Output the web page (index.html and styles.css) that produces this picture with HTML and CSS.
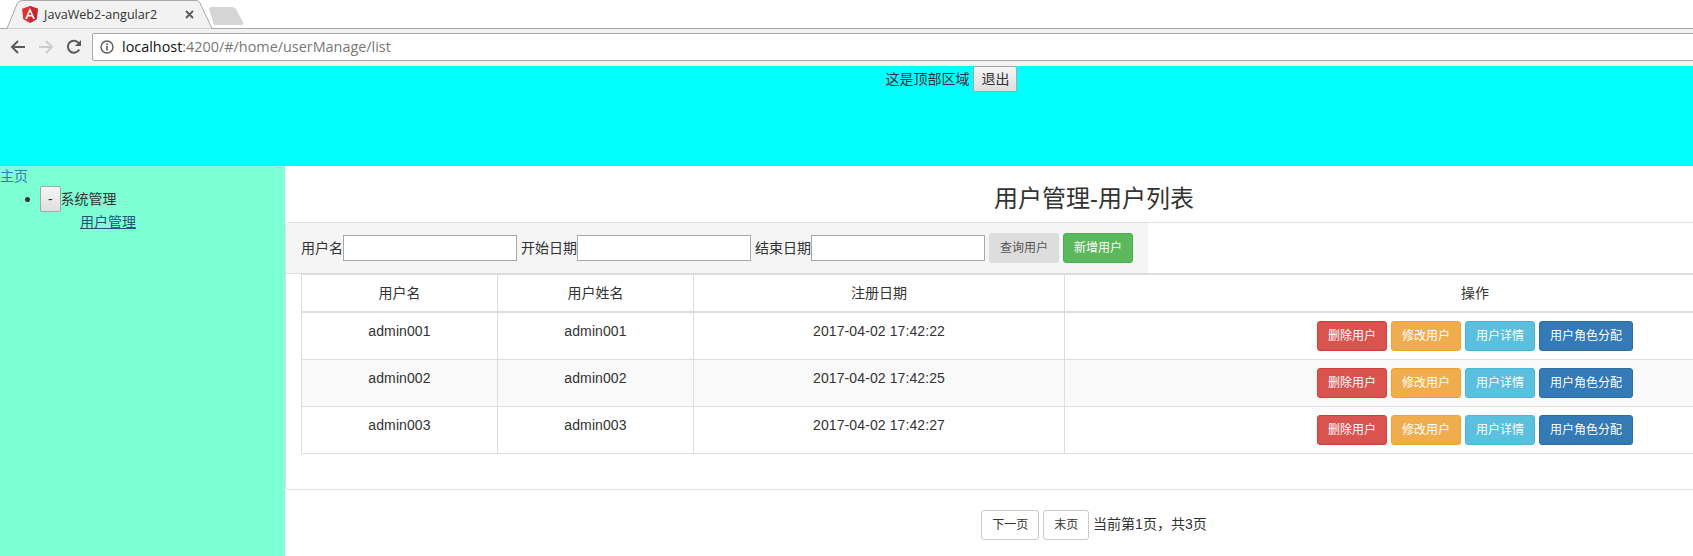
FILE: index.html
```html
<!DOCTYPE html>
<html>
<head>
    <title>JavaWeb2-angular2</title>
    <link rel="stylesheet" href="styles.css">
</head>
<body>

    <div class="browser">
        <div class="tab-strip">
            <div class="tab">
                <svg class="tab-shape" width="206" height="29" viewBox="0 0 206 29">
                    <path d="M0 28.5L10 4Q11.5 .5 15 .5H189Q192 .5 193 3L205 28.5" fill="#f2f2f2" stroke="#a8a8a8"/>
                </svg>
                <svg class="tab-icon" width="16" height="17" viewBox="31 30 188 200">
                    <polygon points="125,30 31.9,63.2 46.1,186.3 125,230 203.9,186.3 218.1,63.2" fill="#dd3333"/>
                    <polygon points="125,30 125,230 203.9,186.3 218.1,63.2" fill="#c3272b"/>
                    <path d="M125 52.1L66.8 182.6h21.7l11.7-29.2h49.4l11.7 29.2h21.7L125 52.1zM142 135.4H108l17-40.9L142 135.4z" fill="#fff"/>
                </svg>
                <span class="tab-title">JavaWeb2-angular2</span>
                <svg class="tab-close" width="9" height="9" viewBox="0 0 9 9">
                    <path d="M1 1L8 8M8 1L1 8" stroke="#5a5a5a" stroke-width="1.8"/>
                </svg>
            </div>
            <svg class="new-tab" width="35" height="18" viewBox="0 0 35 18">
                <path d="M2 0H23C25 0 26 1 27 2L34 15C35 17 34 18 32 18H7C5 18 4 17 4 15L0 2C0 1 1 0 2 0Z" fill="#d5d5d5"/>
            </svg>
        </div>
        <div class="toolbar">
            <svg class="nav-icon" width="16" height="16" viewBox="0 0 16 16">
                <path d="M15 8H2M8 2L2 8L8 14" fill="none" stroke="#5a5a5a" stroke-width="2"/>
            </svg>
            <svg class="nav-icon" width="16" height="16" viewBox="0 0 16 16">
                <path d="M1 8H14M8 2L14 8L8 14" fill="none" stroke="#ccc" stroke-width="2"/>
            </svg>
            <svg class="nav-icon" width="16" height="16" viewBox="0 0 16 16">
                <path d="M13.2 10.5A6 6 0 1 1 12.6 4" fill="none" stroke="#5a5a5a" stroke-width="2"/>
                <path d="M15 1V7H9Z" fill="#5a5a5a"/>
            </svg>
            <div class="address">
                <svg width="14" height="14" viewBox="0 0 14 14">
                    <circle cx="7" cy="7" r="6" fill="none" stroke="#5a5a5a" stroke-width="1.4"/>
                    <path d="M7 6V10.5M7 3.2V5" stroke="#5a5a5a" stroke-width="1.6"/>
                </svg>
                <span class="url"><span class="url-host">localhost</span>:4200/#/home/userManage/list</span>
            </div>
        </div>
    </div>

    <div class="page">
        <div class="topbar">
            这是顶部区域 <button class="plain-btn">退出</button>
        </div>

        <div class="layout">
            <div class="sidebar">
                <a class="home-link" href="#">主页</a>
                <ul class="menu">
                    <li>
                        <button class="plain-btn">-</button>系统管理
                        <ul class="submenu">
                            <li><a class="sub-link" href="#">用户管理</a></li>
                        </ul>
                    </li>
                </ul>
            </div>

            <div class="content">
                <h3 class="page-title">用户管理-用户列表</h3>
                <div class="panel">
                    <div class="search-row">
                        <div class="search-bar">
                            <label>用户名</label><input type="text">
                            <label>开始日期</label><input type="text">
                            <label>结束日期</label><input type="text">
                            <button class="btn btn-query">查询用户</button>
                            <button class="btn btn-success">新增用户</button>
                        </div>
                    </div>
                    <div class="panel-body">
                        <table class="user-table">
                            <thead>
                                <tr>
                                    <th class="col-id">用户名</th>
                                    <th class="col-name">用户姓名</th>
                                    <th class="col-date">注册日期</th>
                                    <th>操作</th>
                                </tr>
                            </thead>
                            <tbody>
                                <tr>
                                    <td>admin001</td>
                                    <td>admin001</td>
                                    <td>2017-04-02 17:42:22</td>
                                    <td>
                                        <button class="btn btn-danger">删除用户</button>
                                        <button class="btn btn-warning">修改用户</button>
                                        <button class="btn btn-info">用户详情</button>
                                        <button class="btn btn-primary">用户角色分配</button>
                                    </td>
                                </tr>
                                <tr>
                                    <td>admin002</td>
                                    <td>admin002</td>
                                    <td>2017-04-02 17:42:25</td>
                                    <td>
                                        <button class="btn btn-danger">删除用户</button>
                                        <button class="btn btn-warning">修改用户</button>
                                        <button class="btn btn-info">用户详情</button>
                                        <button class="btn btn-primary">用户角色分配</button>
                                    </td>
                                </tr>
                                <tr>
                                    <td>admin003</td>
                                    <td>admin003</td>
                                    <td>2017-04-02 17:42:27</td>
                                    <td>
                                        <button class="btn btn-danger">删除用户</button>
                                        <button class="btn btn-warning">修改用户</button>
                                        <button class="btn btn-info">用户详情</button>
                                        <button class="btn btn-primary">用户角色分配</button>
                                    </td>
                                </tr>
                            </tbody>
                        </table>
                    </div>
                </div>
                <div class="pager">
                    <button class="btn btn-default">下一页</button>
                    <button class="btn btn-default">末页</button>
                    当前第1页，共3页
                </div>
            </div>
        </div>
    </div>

</body>
</html>
```

FILE: styles.css
```css
* {
    box-sizing: border-box;
}

html, body {
    height: 556px;
    overflow: hidden;
}

body {
    margin: 0;
    font-family: "Liberation Sans", "Noto Sans CJK SC", sans-serif;
    font-size: 14px;
    line-height: 20px;
    color: #333;
    background: white;
}

/* browser window top */
.browser {
    height: 66px;
    overflow: hidden;
}

.tab-strip {
    display: flex;
    align-items: flex-start;
    height: 29px;
    padding-left: 7px;
    border-bottom: 1px solid #a8a8a8;
}

.tab {
    position: relative;
    display: flex;
    align-items: center;
    flex: none;
    width: 206px;
    height: 29px;
    padding: 0 0 0 15px;
}

.tab-shape {
    position: absolute;
    left: 0;
    top: 0;
}

.tab-icon, .tab-title, .tab-close {
    position: relative;
}

.tab-title {
    margin-left: 6px;
    width: 141px;
    font-family: "Open Sans", sans-serif;
    font-size: 12.6px;
    color: #333;
    white-space: nowrap;
}

.new-tab {
    flex: none;
    margin: 7px 0 0 -4px;
}

.toolbar {
    display: flex;
    align-items: center;
    height: 37px;
    padding: 0 0 1px 10px;
    background: #f2f2f2;
}

.nav-icon {
    flex: none;
    margin-right: 12px;
}

.address {
    display: flex;
    align-items: center;
    flex: 1;
    height: 28px;
    margin: 0 -4px 0 -2px;
    padding-left: 7px;
    background: white;
    border: 1px solid #a9a9a9;
    border-radius: 2px;
}

.url {
    margin-left: 8px;
    font-family: "Open Sans", sans-serif;
    font-size: 14.4px;
    color: #777;
}

.url-host {
    color: #111;
}

/* page, it was wider than the photographed window */
.page {
    width: 1903px;
}

.topbar {
    height: 100px;
    background-color: cyan;
    text-align: center;
}

.plain-btn {
    height: 26px;
    padding: 0 7px;
    font: inherit;
    color: #333;
    background: linear-gradient(#f6f6f6, #dedede);
    border: 1px solid #a6a6a6;
    border-radius: 2px;
}

.layout {
    display: flex;
}

.sidebar {
    flex: none;
    width: 285px;
    height: 390px;
    background-color: aquamarine;
}

.home-link {
    display: block;
    color: #337ab7;
    text-decoration: none;
}

.menu {
    margin: 0;
    padding-left: 40px;
    list-style: none;
}

.menu > li::before {
    content: "";
    display: inline-block;
    width: 5px;
    height: 5px;
    margin: 0 6px 2px -15px;
    background: #333;
    border-radius: 50%;
}

.submenu {
    margin: 0;
    padding-left: 40px;
    list-style: none;
}

.sub-link {
    color: #23527c;
    text-decoration: underline;
}

.content {
    flex: none;
    width: 1618px;
}

.page-title {
    margin: 20px 0 10px;
    font-size: 24px;
    font-weight: 400;
    line-height: 26.4px;
    text-align: center;
}

.panel {
    border: 1px solid #ddd;
    border-radius: 4px;
}

.search-row {
    border-bottom: 1px solid #ddd;
}

.search-bar {
    display: flex;
    align-items: center;
    width: 862px;
    height: 50px;
    padding: 0 15px;
    background: #f5f5f5;
}

.search-bar label {
    flex: none;
}

.search-bar input {
    flex: none;
    width: 174px;
    height: 26px;
    margin-right: 4px;
    padding: 1px 2px;
    background: white;
    border: 1px solid #a9a9a9;
}

.search-bar .btn {
    flex: none;
    margin-right: 4px;
}

.panel-body {
    padding: 0 15px 15px;
}

.user-table {
    width: 1585px;
    margin-bottom: 20px;
    border-collapse: collapse;
    table-layout: fixed;
    text-align: center;
}

.user-table th, .user-table td {
    padding: 8px;
    border: 1px solid #ddd;
    vertical-align: top;
}

.user-table td {
    letter-spacing: .1px;
}

.user-table th {
    font-weight: normal;
    border-bottom-width: 2px;
}

.user-table tbody tr:nth-child(2) {
    background: #f9f9f9;
}

.col-id, .col-name {
    width: 196px;
}

.col-date {
    width: 371px;
}

.btn {
    height: 30px;
    padding: 5px 10px;
    font: inherit;
    font-size: 12px;
    line-height: 18px;
    letter-spacing: 0;
    color: white;
    white-space: nowrap;
    border: 1px solid transparent;
    border-radius: 3px;
}

.btn-query {
    color: #555;
    background: #ddd;
}

.btn-success {
    background: #5cb85c;
    border-color: #4cae4c;
}

.btn-danger {
    background: #d9534f;
    border-color: #d43f3a;
}

.btn-warning {
    background: #f0ad4e;
    border-color: #eea236;
}

.btn-info {
    background: #5bc0de;
    border-color: #46b8da;
}

.btn-primary {
    background: #337ab7;
    border-color: #2e6da4;
}

.btn-default {
    color: #333;
    background: white;
    border-color: #ccc;
}

.pager {
    margin-top: 20px;
    text-align: center;
}
```
